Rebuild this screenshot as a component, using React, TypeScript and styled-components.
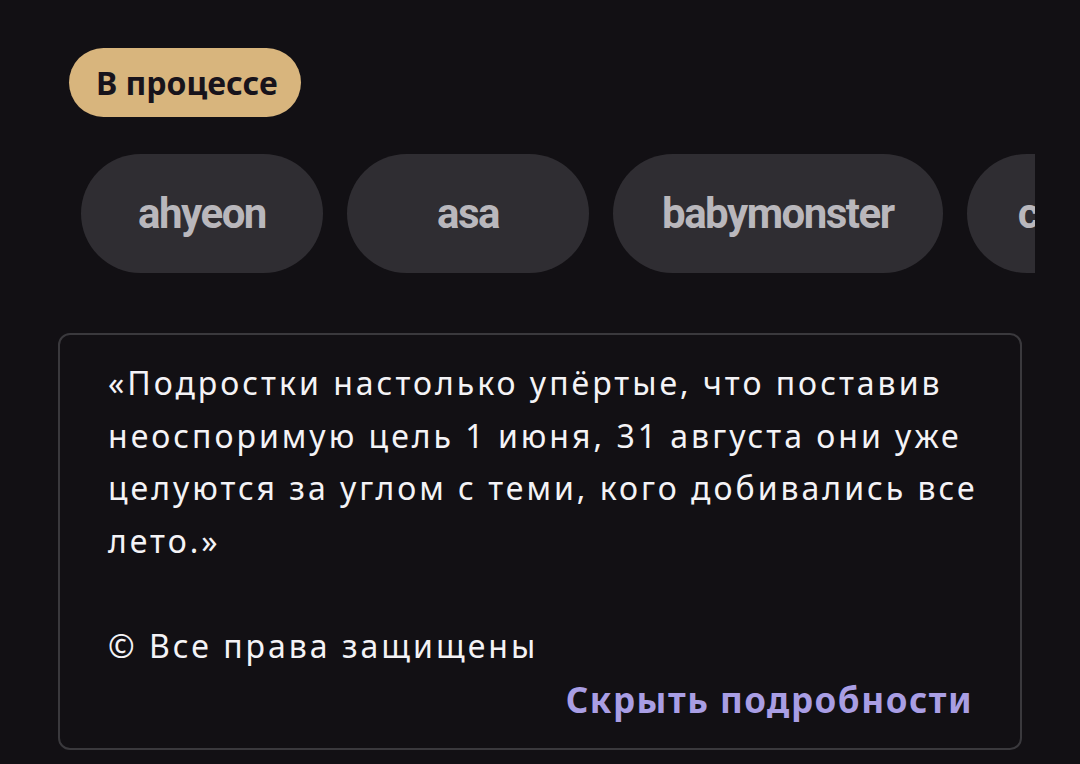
import React from "react";
import styled, { createGlobalStyle } from "styled-components";

const GlobalStyle = createGlobalStyle`
  html, body {
    margin: 0;
    padding: 0;
    background: #121014;
  }
  body {
    font-family: "Noto Sans", "Open Sans", sans-serif;
    color: #f4f3f6;
  }
`;

const Page = styled.div`
  width: 1080px;
  height: 764px;
  overflow: hidden;
  box-sizing: border-box;
  padding: 48px 58px 0 58px;
  display: flex;
  flex-direction: column;
`;

const StatusBadge = styled.div`
  align-self: flex-start;
  margin-left: 11px;
  height: 69px;
  padding: 0 23px 0 27px;
  display: flex;
  align-items: center;
  border-radius: 999px;
  background: #d8b57d;
  color: #17131b;
  font-family: "Noto Sans", sans-serif;
  font-weight: 700;
  font-size: 32px;
`;

const TagStrip = styled.div`
  margin: 37px 0 0 23px;
  width: 954px;
  display: flex;
  gap: 24px;
  overflow: hidden;
`;

const Tag = styled.div`
  flex: none;
  min-width: 242px;
  height: 119px;
  box-sizing: border-box;
  padding: 0 49px;
  display: flex;
  align-items: center;
  justify-content: center;
  border-radius: 999px;
  background: #2f2d32;
  color: #b9b7bc;
  font-family: Roboto, sans-serif;
  font-weight: 700;
  font-size: 42px;
  letter-spacing: -1.5px;
`;

const Card = styled.div`
  margin-top: 60px;
  width: 964px;
  box-sizing: border-box;
  border: 2px solid #3a393d;
  border-radius: 12px;
  padding: 22px 32px 22px 48px;
  display: flex;
  flex-direction: column;
`;

const Quote = styled.p`
  margin: 0;
  white-space: pre-wrap;
  font-size: 32px;
  line-height: 52.5px;
  letter-spacing: 3px;
  color: #f4f3f6;
`;

const HideLink = styled.button`
  align-self: flex-end;
  margin: 2px 15px 0 0;
  padding: 0;
  border: none;
  background: none;
  cursor: pointer;
  font-family: "Noto Sans", sans-serif;
  font-weight: 700;
  font-size: 35px;
  line-height: 52px;
  letter-spacing: 1.5px;
  color: #a99ee4;
`;

const tags = ["ahyeon", "asa", "babymonster", "chiquita"];

const quote =
  "«Подростки настолько упёртые, что поставив неоспоримую цель 1 июня, 31 августа они уже целуются за углом с теми, кого добивались все лето.»\n\n© Все права защищены";

export default function App() {
  return (
    <>
      <GlobalStyle />
      <Page>
        <StatusBadge>В процессе</StatusBadge>
        <TagStrip>
          {tags.map((t) => (
            <Tag key={t}>{t}</Tag>
          ))}
        </TagStrip>
        <Card>
          <Quote>{quote}</Quote>
          <HideLink>Скрыть подробности</HideLink>
        </Card>
      </Page>
    </>
  );
}
